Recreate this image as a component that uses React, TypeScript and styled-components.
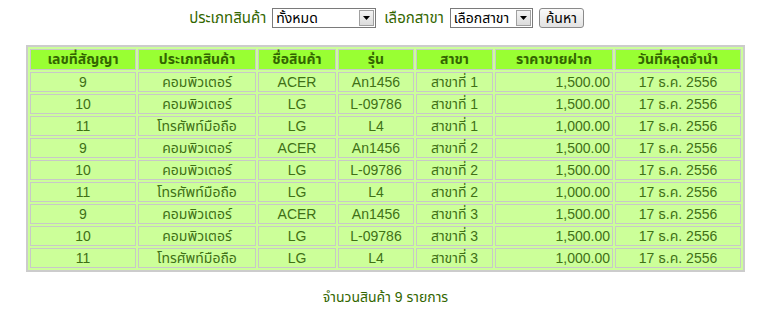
import React from "react";
import styled, { createGlobalStyle } from "styled-components";

const GlobalStyle = createGlobalStyle`
  body {
    margin: 0;
    background: #fff;
    font-family: Tahoma, "Liberation Sans", "Noto Sans Thai", "Noto Sans", sans-serif;
  }
`;

const Page = styled.div`
  padding: 8px 16px 8px 8px;
  color: #336600;
  font-size: 14px;
`;

const SearchForm = styled.form`
  display: flex;
  justify-content: center;
  align-items: center;
  gap: 6px;
  height: 20px;
`;

const Label = styled.span`
  color: #336600;
  font-size: 15px;
  margin-left: 2px;
`;

const SelectWrap = styled.div<{ $width: number }>`
  display: flex;
  align-items: stretch;
  width: ${(p) => p.$width}px;
  height: 20px;
  box-sizing: border-box;
  border: 1px solid #7a7a7a;
  background: #fff;
`;

const Select = styled.select`
  flex: 1;
  min-width: 0;
  appearance: none;
  border: none;
  outline: none;
  background: transparent;
  padding: 0 3px;
  font-family: inherit;
  font-size: 14px;
  color: #000;
`;

const ArrowBox = styled.div`
  width: 15px;
  margin: 1px;
  display: flex;
  align-items: center;
  justify-content: center;
  box-sizing: border-box;
  border: 1px solid #a0a0a0;
  background: linear-gradient(#f4f4f4, #dcdcdc);
`;

const Button = styled.button`
  height: 20px;
  padding: 0 6px;
  box-sizing: border-box;
  border: 1px solid #8a8a8a;
  border-radius: 3px;
  background: linear-gradient(#fafafa, #e2e2e2);
  font-family: inherit;
  font-size: 14px;
  color: #000;
  line-height: 16px;
`;

const Table = styled.table`
  margin: 17px auto 0;
  table-layout: fixed;
  border: 2px solid #cccccc;
  border-spacing: 2px;
  background: #ccff99;
`;

const Th = styled.th<{ $w: number }>`
  width: ${(p) => p.$w}px;
  box-sizing: border-box;
  height: 21px;
  padding: 0;
  border: 1px solid #c8c8c8;
  background: #99ff33;
  color: #336600;
  font-weight: bold;
  font-size: 14px;
  line-height: 19px;
  text-align: center;
`;

const Td = styled.td<{ $right?: boolean }>`
  box-sizing: border-box;
  height: 20px;
  padding: 0 2px;
  border: 1px solid #c8c8c8;
  background: #ccff99;
  color: #3f7016;
  font-size: 14px;
  line-height: 18px;
  text-align: ${(p) => (p.$right ? "right" : "center")};
`;

const Summary = styled.p`
  margin: 15px 0 0;
  text-align: center;
  color: #336600;
  font-size: 14px;
`;

const Arrow = () => (
  <svg width="7" height="4" viewBox="0 0 7 4">
    <path d="M0 0h7L3.5 4z" fill="#000" />
  </svg>
);

const columns = [
  { title: "เลขที่สัญญา", w: 106 },
  { title: "ประเภทสินค้า", w: 118 },
  { title: "ชื่อสินค้า", w: 78 },
  { title: "รุ่น", w: 76 },
  { title: "สาขา", w: 77 },
  { title: "ราคาขายฝาก", w: 118 },
  { title: "วันที่หลุดจำนำ", w: 126 },
];

const products = [
  { id: "9", type: "คอมพิวเตอร์", name: "ACER", model: "An1456", price: "1,500.00" },
  { id: "10", type: "คอมพิวเตอร์", name: "LG", model: "L-09786", price: "1,500.00" },
  { id: "11", type: "โทรศัพท์มือถือ", name: "LG", model: "L4", price: "1,000.00" },
];

const rows = [1, 2, 3].flatMap((branch) =>
  products.map((p) => ({ ...p, branch: `สาขาที่ ${branch}`, date: "17 ธ.ค. 2556" }))
);

export default function App() {
  return (
    <Page>
      <GlobalStyle />
      <SearchForm onSubmit={(e) => e.preventDefault()}>
        <Label>ประเภทสินค้า</Label>
        <SelectWrap $width={104}>
          <Select defaultValue="all">
            <option value="all">ทั้งหมด</option>
          </Select>
          <ArrowBox>
            <Arrow />
          </ArrowBox>
        </SelectWrap>
        <Label>เลือกสาขา</Label>
        <SelectWrap $width={83}>
          <Select defaultValue="">
            <option value="">เลือกสาขา</option>
          </Select>
          <ArrowBox>
            <Arrow />
          </ArrowBox>
        </SelectWrap>
        <Button type="submit">ค้นหา</Button>
      </SearchForm>

      <Table>
        <thead>
          <tr>
            {columns.map((c) => (
              <Th key={c.title} $w={c.w}>
                {c.title}
              </Th>
            ))}
          </tr>
        </thead>
        <tbody>
          {rows.map((r, i) => (
            <tr key={i}>
              <Td>{r.id}</Td>
              <Td>{r.type}</Td>
              <Td>{r.name}</Td>
              <Td>{r.model}</Td>
              <Td>{r.branch}</Td>
              <Td $right>{r.price}</Td>
              <Td>{r.date}</Td>
            </tr>
          ))}
        </tbody>
      </Table>

      <Summary>จำนวนสินค้า 9 รายการ</Summary>
    </Page>
  );
}
